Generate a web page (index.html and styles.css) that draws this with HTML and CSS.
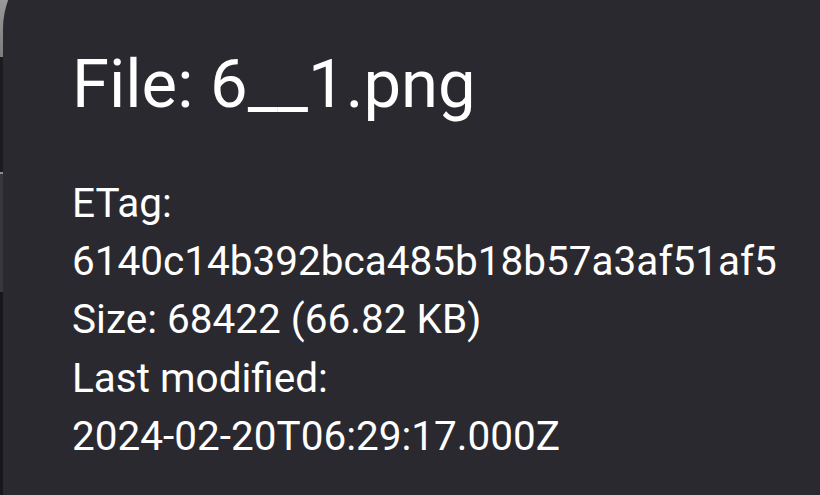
FILE: index.html
```html
<!DOCTYPE html>
<html lang="en">
<head>
  <meta charset="UTF-8">
  <meta name="viewport" content="width=device-width, initial-scale=1.0">
  <title>File details</title>
  <link rel="stylesheet" href="styles.css">
</head>
<body>
  <div class="backdrop">
    <div class="strip strip-top"></div>
    <div class="strip strip-dark"></div>
    <div class="strip strip-line"></div>
    <div class="strip strip-mid"></div>
    <div class="strip strip-bottom"></div>
  </div>

  <div class="dialog">
    <h2 class="dialog-title">File: 6__1.png</h2>
    <div class="dialog-body">
      <div>ETag:</div>
      <div>6140c14b392bca485b18b57a3af51af5</div>
      <div>Size: 68422 (66.82 KB)</div>
      <div>Last modified:</div>
      <div>2024-02-20T06:29:17.000Z</div>
    </div>
  </div>
</body>
</html>
```

FILE: styles.css
```css
html, body { margin: 0; height: 100%; overflow: hidden; }
body { font-family: Roboto, "Noto Sans", sans-serif; background: #17161b; }

.backdrop { display: flex; flex-direction: column; height: 100%; width: 40px; }
.strip { width: 100%; }
.strip-top { height: 57px; background: linear-gradient(180deg, #9a9a9a, #7c7c7e); }
.strip-dark { height: 115px; background: #1b1a1f; }
.strip-line { height: 2px; background: #8d8d90; }
.strip-mid { height: 118px; background: #38373c; }
.strip-bottom { flex: 1; background: #17161b; }

.dialog {
  position: absolute;
  top: -55px;
  left: 3px;
  right: 0;
  bottom: 0;
  overflow: hidden;
  background: #2b2930;
  border-top-left-radius: 84px;
  padding: 95px 0 0 69px;
  color: #ffffff;
}
.dialog-title { margin: 0 0 46px; font-size: 67px; font-weight: 400; line-height: 88px; }
.dialog-body { font-size: 40.5px; line-height: 58.2px; }
```
